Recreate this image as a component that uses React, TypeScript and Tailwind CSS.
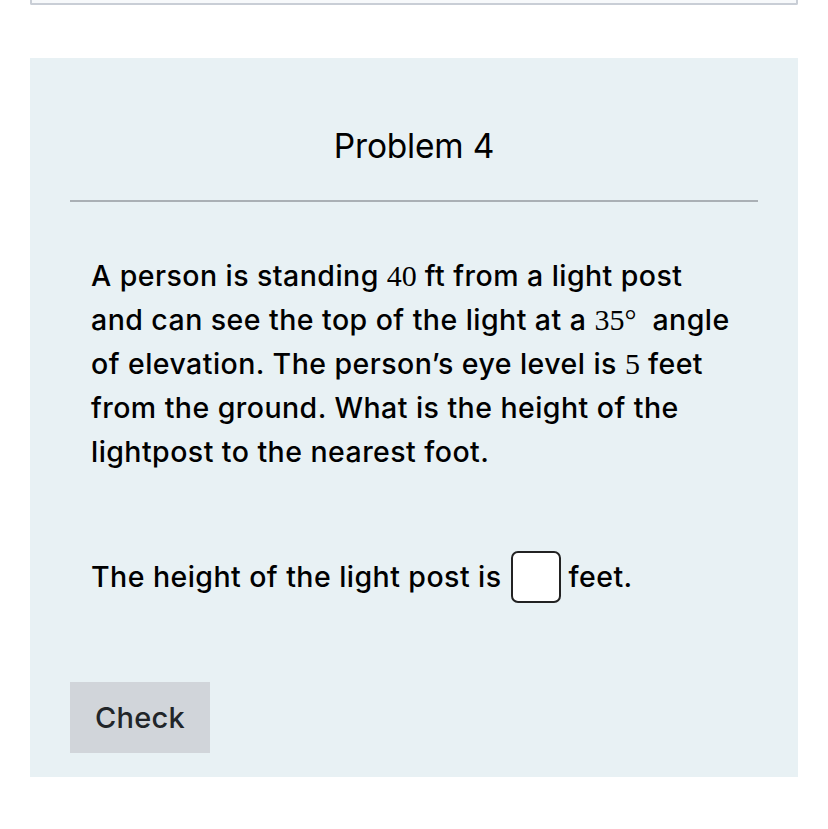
export default function App() {
  const serif = { fontFamily: '"Liberation Serif", "Times New Roman", serif' };
  return (
    <div className="min-h-[829px] w-[828px] bg-white font-['Inter',_'Liberation_Sans',_sans-serif] text-black">
      <div className="mx-[30px] h-[5px] rounded-b-[2px] border-x-2 border-b-2 border-[#c9ced6] bg-[#f7f9fb]" />
      <div className="mx-[30px] mt-[53px] bg-[#e8f1f4] px-10 pb-[24px] pt-[66px]">
        <h1 className="text-center text-[33.5px] font-normal leading-[44px] tracking-[-0.2px]">Problem 4</h1>
        <div className="mt-[32px] h-[2px] bg-[#aab0b5]" />
        <p className="mt-[52px] px-[21px] text-[28.5px] font-medium leading-[44px] tracking-[0.45px]">
          A person is standing <span className="text-[30px] tracking-normal" style={serif}>40</span> ft from a light post and can see the top of the light at a{" "}
          <span className="text-[30px] tracking-normal" style={serif}>35°</span>&nbsp; angle of elevation. The person’s eye level is{" "}
          <span className="text-[30px] tracking-normal" style={serif}>5</span> feet from the ground. What is the height of the lightpost to the nearest foot.
        </p>
        <div className="mt-[77px] flex items-center px-[21px] text-[28.5px] font-medium leading-[44px] tracking-[0.45px]">
          <span>The height of the light post is</span>
          <span className="ml-[9px] mr-[8px] inline-block h-[52px] w-[50px] rounded-[7px] border-2 border-[#222] bg-white" />
          <span>feet.</span>
        </div>
        <button className="mt-[79px] flex h-[71px] w-[140px] items-center justify-center bg-[#d1d5da] text-[29px] font-medium tracking-[0.3px] text-[#212529]">
          Check
        </button>
      </div>
    </div>
  );
}
